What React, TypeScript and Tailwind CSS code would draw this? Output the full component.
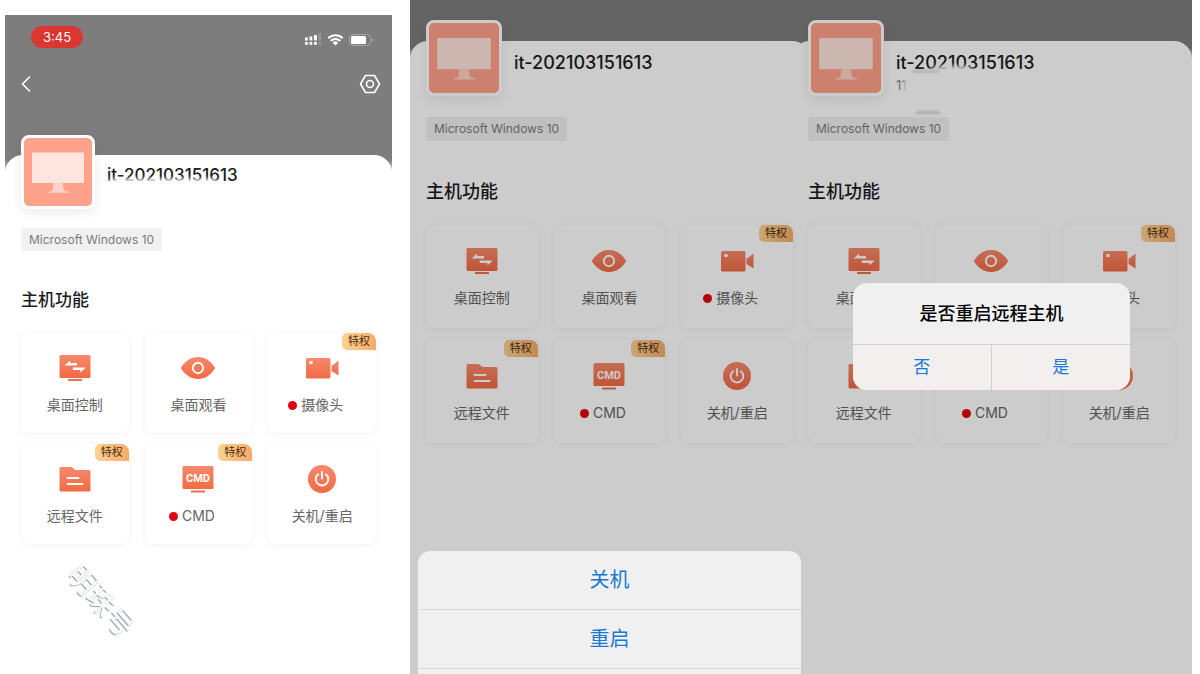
import React from "react";

type Size = "compact" | "regular";
type IconName = "control" | "eye" | "camera" | "folder" | "cmd" | "power";

function Gradient({ id }: { id: string }) {
  return (
    <defs>
      <linearGradient id={id} x1="0" y1="0" x2="0" y2="1">
        <stop offset="0" stopColor="#f6896d" />
        <stop offset="1" stopColor="#f26a43" />
      </linearGradient>
    </defs>
  );
}

function ActionIcon({ name, uid }: { name: IconName; uid: string }) {
  const id = `${uid}-${name}`;
  const fill = `url(#${id})`;
  return (
    <svg viewBox="0 0 36 30" className="h-[30px] w-9" aria-hidden="true">
      <Gradient id={id} />
      {name === "control" && (
        <>
          <rect x="2.5" y="2" width="31" height="23" rx="1.5" fill={fill} />
          <rect x="11" y="26" width="14" height="2" rx="0.6" fill="#e9714f" />
          <path d="M7.500 12.400 13.200 7.600v2.400h6.800v2.400z" fill="#fff" />
          <path d="M28.800 14.400 23.400 19.400v-2.500h-7.600v-2.500z" fill="#fff" />
        </>
      )}
      {name === "eye" && (
        <>
          <path d="M.8 15C5.600 7.500 11 4 18 4s12.400 3.500 17.200 11C30.400 22.500 25 26 18 26S5.600 22.500.8 15z" fill={fill} />
          <circle cx="18" cy="15" r="5.200" fill="none" stroke="#fff" strokeWidth="1.900" />
        </>
      )}
      {name === "camera" && (
        <>
          <rect x="2" y="5" width="24.500" height="20.500" rx="1.500" fill={fill} />
          <path d="M27.500 13 34.500 7.500V22.500L27.500 18z" fill={fill} />
          <circle cx="7" cy="9.500" r="1.800" fill="#fff" />
        </>
      )}
      {name === "folder" && (
        <>
          <path d="M4 3h10.500l4 3H32a1.500 1.500 0 0 1 1.500 1.500V26A1.500 1.500 0 0 1 32 27.500H4A1.500 1.500 0 0 1 2.500 26V4.500A1.500 1.500 0 0 1 4 3z" fill={fill} />
          <path d="M10.500 14h11M10.500 20h15" stroke="#fff" strokeWidth="1.900" strokeLinecap="round" />
        </>
      )}
      {name === "cmd" && (
        <>
          <rect x="2.500" y="2" width="31" height="23" rx="1.500" fill={fill} />
          <rect x="11" y="26.500" width="14" height="2" rx="0.600" fill="#e9714f" />
          <text x="18" y="17.500" textAnchor="middle" fontSize="11" fontWeight="700" fill="#fff" fontFamily="Roboto, sans-serif">
            CMD
          </text>
        </>
      )}
      {name === "power" && (
        <>
          <circle cx="18" cy="15" r="14" fill={fill} />
          <path d="M14.200 10.200a6.300 6.300 0 1 0 7.600 0M18 8v6.500" fill="none" stroke="#fff" strokeWidth="1.900" strokeLinecap="round" />
        </>
      )}
    </svg>
  );
}

const actions: { icon: IconName; label: string; vip?: boolean; dot?: boolean }[] = [
  { icon: "control", label: "桌面控制" },
  { icon: "eye", label: "桌面观看" },
  { icon: "camera", label: "摄像头", vip: true, dot: true },
  { icon: "folder", label: "远程文件", vip: true },
  { icon: "cmd", label: "CMD", vip: true, dot: true },
  { icon: "power", label: "关机/重启" },
];

function ActionGrid({ size, uid }: { size: Size; uid: string }) {
  return (
    <div className={size === "compact" ? "grid grid-cols-3 gap-x-4 gap-y-[11px]" : "grid grid-cols-3 gap-x-4 gap-y-3"}>
      {actions.map((a) => (
        <button
          key={a.icon}
          type="button"
          className={
            (size === "compact" ? "h-[100px] pt-5 " : "h-[103px] pt-[21px] ") +
            "relative flex flex-col items-center gap-3 rounded-lg bg-white shadow-[0_1px_7px_rgba(0,0,0,0.06)]"
          }
        >
          <ActionIcon name={a.icon} uid={uid} />
          <span className="relative text-sm leading-5 text-[#666]">
            {a.dot && <span className="absolute top-[6px] right-full mr-1 size-[9px] rounded-full bg-[#e0000f]" />}
            {a.label}
          </span>
          {a.vip && (
            <span className="absolute top-0 right-0 rounded-tl-[5px] rounded-tr-lg rounded-bl-[5px] bg-linear-to-r from-[#fad393] to-[#f7ab68] px-[6px] text-[11px] leading-[17px] text-[#4a2d10]">
              特权
            </span>
          )}
        </button>
      ))}
    </div>
  );
}

function HostAvatar({ size }: { size: Size }) {
  return (
    <div
      className={
        (size === "compact" ? "-mt-5 size-[74px] " : "-mt-[21px] size-[76px] ") +
        "shrink-0 rounded-lg border-[3px] border-white bg-[#ffa28b] shadow-[0_4px_12px_rgba(0,0,0,0.08)]"
      }
    >
      <svg viewBox="0 0 68 68" className="h-full w-full" role="img" aria-label="主机">
        <path d="M8 14.500h52V45H8z" fill="#ffe5dd" />
        <path d="M29.500 45h9l1.500 7.500 5 1.500v.8H24V54l4.500-1.500z" fill="#ffd2c5" />
      </svg>
    </div>
  );
}

function HostSheet({ size, uid, note, smudge }: { size: Size; uid: string; note?: string; smudge?: React.ReactNode }) {
  const compact = size === "compact";
  return (
    <>
      <div className="flex gap-3">
        <HostAvatar size={size} />
        <div className={compact ? "relative pt-2" : "relative pt-[10px]"}>
          <h1 className={(compact ? "text-[17px] " : "text-lg ") + "leading-6 font-medium text-[#1c1c1e]"}>it-202103151613</h1>
          {note && <p className="text-[13px] leading-[21px] text-[#8a8a8a]">{note}</p>}
          {smudge}
        </div>
      </div>
      <p
        className={
          (compact ? "mt-[19px] leading-[23px] " : "mt-[21px] leading-6 ") +
          "w-fit rounded-[3px] bg-[#f1f1f2] px-2 text-[12px] text-[#7b7b7d]"
        }
      >
        Microsoft Windows 10
      </p>
      <h2 className={(compact ? "mt-[37px] mb-[21px] text-[17px] " : "mt-[39px] mb-[21px] text-lg ") + "leading-6 font-medium text-[#1c1c1e]"}>
        主机功能
      </h2>
      <ActionGrid size={size} uid={uid} />
    </>
  );
}

function StatusIcons() {
  return (
    <svg viewBox="0 0 70 16" className="h-4 w-[70px]" role="img" aria-label="状态">
      <g fill="#fff">
        <path d="M1 5.500h2.800v3H1zM5.500 4.500h2.800v4H5.500zM10 3h2.800v5.500H10zM1 10h2.800v2.800H1zM5.500 10h2.800v2.800H5.500zM10 10h2.800v2.800H10z" />
        <path d="M14.500 1h2.500v7.500h-2.500zM14.500 10h2.500v2.800h-2.500z" opacity=".2" />
        <path d="m31.500 13.500 2.900-2.900a4.100 4.100 0 0 0-5.800 0z" />
      </g>
      <path d="M24.300 6.300a10.200 10.200 0 0 1 14.400 0M26.700 8.900a6.800 6.800 0 0 1 9.600 0" fill="none" stroke="#fff" strokeWidth="2" />
      <rect x="45.500" y="2.500" width="21" height="11" rx="3" fill="none" stroke="#fff" strokeOpacity=".3" />
      <rect x="47" y="4" width="15" height="8" rx="1.500" fill="#fff" />
      <path d="M68 6v4c1.800-.6 1.800-3.400 0-4z" fill="#fff" opacity=".35" />
    </svg>
  );
}

export default function App() {
  return (
    <main className="grid min-h-screen grid-cols-[410fr_391fr_399fr] overflow-hidden bg-white font-['Inter','Noto_Sans_CJK_SC',sans-serif]">
      <section className="relative mr-[18px] ml-[5px] mt-[15px] bg-linear-to-b from-[#7d7d7e] from-[145px] to-white to-[160px]">
        <header className="h-[140px]">
          <div className="flex items-start justify-between pt-[11px] pr-[18px] pl-[26px]">
            <time className="rounded-full bg-[#da3732] px-3 text-[13px] leading-[22px] text-white">3:45</time>
            <span className="pt-[6px]"><StatusIcons /></span>
          </div>
          <nav className="flex items-center justify-between pt-6 pr-[11px] pl-[14px]">
            <button type="button" aria-label="返回">
              <svg viewBox="0 0 16 24" className="h-6 w-4" fill="none" stroke="#fff" strokeWidth="1.600">
                <path d="M11 4.500 3.500 12l7.500 7.500" />
              </svg>
            </button>
            <button type="button" aria-label="设置">
              <svg viewBox="0 0 22 24" className="h-6 w-[22px]" fill="none" stroke="#fff" strokeWidth="1.600">
                <path d="M6.500 3.500h9L20.500 12l-5 8.500h-9L1.500 12z" strokeLinejoin="round" />
                <circle cx="11" cy="12" r="3.500" />
              </svg>
            </button>
          </nav>
        </header>
        <div className="rounded-t-[18px] bg-white px-4 pb-4">
          <HostSheet
            size="compact"
            uid="a"
            smudge={<span className="absolute top-6 left-0 h-3 w-28 rounded-full bg-white blur-[2px]" />}
          />
        </div>
        <span className="absolute top-[570px] left-[54px] rotate-[49deg] text-[28px] leading-8 whitespace-nowrap text-white [text-shadow:0_1px_1px_#888]">
          明珠号
        </span>
      </section>

      <section className="relative overflow-hidden bg-linear-to-b from-[#7d7d7e] from-[48px] to-white to-[62px] pt-[41px]">
        <div className="-mr-[9px] rounded-t-[18px] bg-white pr-[17px] pl-4">
          <HostSheet size="regular" uid="b" />
        </div>
        <div className="absolute inset-0 flex flex-col justify-end bg-black/20 pl-2">
          <div role="dialog" aria-label="关机/重启" className="flex h-[123px] flex-col overflow-hidden rounded-t-xl bg-[#f0f0f0] text-xl text-[#1878d2]">
            <button type="button" className="h-[59px] shrink-0 border-b border-[#d9d9d9]">关机</button>
            <button type="button" className="h-[59px] shrink-0 border-b border-[#d9d9d9]">重启</button>
          </div>
        </div>
      </section>

      <section className="relative mr-2 overflow-hidden bg-linear-to-b from-[#7d7d7e] from-[48px] to-white to-[62px] pt-[41px]">
        <div className="-ml-[9px] rounded-t-[18px] bg-white pr-[17px] pl-4">
          <HostSheet
            size="regular"
            uid="c"
            note="11"
            smudge={
              <>
                <span className="absolute top-[25px] left-7 h-8 w-14 rounded-full bg-white blur-[2px]" />
                <span className="absolute top-9 left-[7px] h-5 w-12 rounded-md bg-white/70 blur-[1px]" />
                <span className="absolute top-[29px] left-4 h-[3px] w-7 rounded-full bg-[#e4e4e4] blur-[1px]" />
                <span className="absolute top-[70px] left-5 h-[3px] w-6 rounded-full bg-[#d8d8d8] blur-[1px]" />
              </>
            }
          />
        </div>
        <div className="absolute inset-0 bg-black/20 pt-[283px]">
          <div role="alertdialog" aria-labelledby="confirm-title" className="mx-auto w-[277px] -translate-x-[5px] overflow-hidden rounded-[14px] bg-[#f1f0f0]">
            <h3 id="confirm-title" className="text-center text-lg leading-[61px] font-medium text-black">是否重启远程主机</h3>
            <div className="grid grid-cols-2 border-t border-[#d0d0d0] bg-[#f2efee] text-[17px] leading-[45px] text-[#1878d2]">
              <button type="button" className="border-r border-[#d0d0d0]">否</button>
              <button type="button">是</button>
            </div>
          </div>
        </div>
      </section>
    </main>
  );
}
